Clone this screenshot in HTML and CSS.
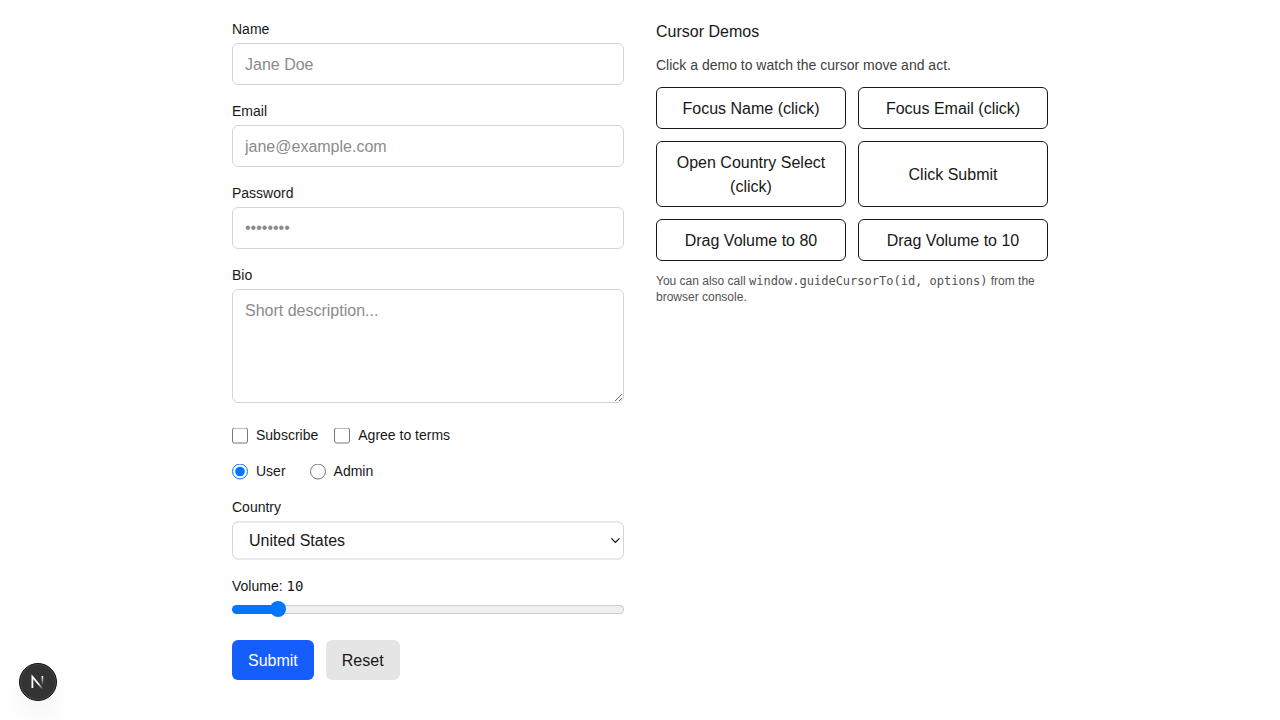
FILE: index.html
```html
<!DOCTYPE html>
<html lang="en">
<head>
<meta charset="utf-8">
<title>Cursor Demos</title>
<link rel="stylesheet" href="styles.css">
</head>
<body>
<main class="page">
  <form class="form">
    <div class="field"><label class="label" for="name">Name</label><input class="input" id="name" type="text" placeholder="Jane Doe"></div>
    <div class="field"><label class="label" for="email">Email</label><input class="input" id="email" type="email" placeholder="jane@example.com"></div>
    <div class="field"><label class="label" for="password">Password</label><input class="input password" id="password" type="password" placeholder="••••••••"></div>
    <div class="field bio"><label class="label" for="bio">Bio</label><textarea class="input area" id="bio" rows="4" placeholder="Short description..."></textarea></div>
    <div class="choices">
      <label class="choice"><input class="check" type="checkbox">Subscribe</label>
      <label class="choice"><input class="check" type="checkbox">Agree to terms</label>
    </div>
    <div class="choices radios">
      <label class="choice"><input class="check" type="radio" name="role" checked>User</label>
      <label class="choice"><input class="check" type="radio" name="role">Admin</label>
    </div>
    <div class="field"><label class="label" for="country">Country</label>
      <div class="select-wrap"><select class="select" id="country"><option>United States</option></select>
      <svg class="chevron" width="10" height="7" viewBox="0 0 10 7" fill="none"><path d="M1.3 1.4 5.4 5.4 9.5 1.4" stroke="#171717" stroke-width="1.3"/></svg></div>
    </div>
    <div class="field volume"><label class="label" for="volume">Volume: <span class="mono">10</span></label><input class="range" id="volume" type="range" min="0" max="100" value="10"></div>
    <div class="actions"><button class="btn submit" type="button">Submit</button><button class="btn reset" type="reset">Reset</button></div>
  </form>
  <section class="demos">
    <h2 class="title">Cursor Demos</h2>
    <p class="intro">Click a demo to watch the cursor move and act.</p>
    <div class="grid">
      <button class="demo">Focus Name (click)</button>
      <button class="demo">Focus Email (click)</button>
      <button class="demo">Open Country Select (click)</button>
      <button class="demo">Click Submit</button>
      <button class="demo">Drag Volume to 80</button>
      <button class="demo">Drag Volume to 10</button>
    </div>
    <p class="note">You can also call <code class="mono">window.guideCursorTo(id, options)</code> from the browser console.</p>
  </section>
</main>
<div class="badge">
  <svg width="38" height="38" viewBox="0 0 38 38" fill="none">
    <defs>
      <linearGradient id="diag" x1="20" y1="20" x2="24.5" y2="25.5" gradientUnits="userSpaceOnUse"><stop stop-color="#fff"/><stop offset="1" stop-color="#fff" stop-opacity="0"/></linearGradient>
      <linearGradient id="stem" x1="23" y1="13" x2="23" y2="22" gradientUnits="userSpaceOnUse"><stop stop-color="#fff"/><stop offset="1" stop-color="#fff" stop-opacity="0"/></linearGradient>
    </defs>
    <path d="M13.4 25V13.7L23.7 26" stroke="url(#diag)" stroke-width="1.8"/>
    <path d="M23.4 13v9" stroke="url(#stem)" stroke-width="1.6"/>
  </svg>
</div>
</body>
</html>
```
FILE: styles.css
```css
* { box-sizing: border-box; margin: 0; }
body { background: #fff; color: #171717; font: 16px/24px "Liberation Sans", Arial, sans-serif; height: 720px; overflow: hidden; }
input, textarea, select, button { font: inherit; color: inherit; }
.page { width: 816px; margin: 0 auto; padding-top: 19px; display: grid; grid-template-columns: 1fr 1fr; gap: 32px; align-items: start; }
.form { display: flex; flex-direction: column; gap: 16px; }
.field { display: flex; flex-direction: column; gap: 4px; }
.label, .choice { font-size: 14px; line-height: 20px; }
.input { width: 100%; height: 42px; padding: 9px 12px 7px; border: 1px solid #d4d4d4; border-radius: 6px; background: transparent; }
.input::placeholder { color: #8b8b8b; opacity: 1; }
.password { padding: 8px 12px; }
.area { height: 114px; resize: vertical; display: block; }
.bio { padding-bottom: 6px; }
.choices { display: flex; gap: 16px; }
.radios { gap: 24px; }
.choice { display: flex; align-items: center; gap: 8px; }
.check { width: 16px; height: 16px; margin: 0; transform: translateY(.5px); }
.select-wrap { position: relative; height: 39px; }
.select { display: block; width: 100%; height: 38px; padding: 6px 16px; border: 1px solid #d4d4d4; border-radius: 6px; background: transparent; appearance: none; transform: translateY(.5px); }
.chevron { position: absolute; right: 4px; top: 16px; pointer-events: none; }
.mono { font-family: "DejaVu Sans Mono", monospace; line-height: 1; }
.range { width: 100%; height: 16px; margin-top: 1px; appearance: none; background: transparent; }
.range::-webkit-slider-runnable-track { height: 9px; border: 1px solid transparent; border-radius: 5px; background: linear-gradient(90deg, #0075ff 46px, transparent 46px) border-box, linear-gradient(#efefef, #efefef) padding-box, linear-gradient(#cbcbcb, #cbcbcb) border-box; }
.range::-webkit-slider-thumb { appearance: none; width: 16px; height: 16px; margin-top: -4.5px; border-radius: 50%; background: #0075ff; }
.volume { padding-bottom: 7px; }
.actions { display: flex; gap: 12px; }
.btn { height: 40px; padding: 9px 16px 7px; border: 0; border-radius: 6px; }
.submit { background: #155dfc; color: #fff; }
.reset { background: #e5e5e5; }
.title { padding-top: 1px; font-size: 16px; font-weight: 400; line-height: 24px; }
.intro { margin-top: 11px; font-size: 14px; line-height: 20px; color: #404040; }
.grid { display: grid; grid-template-columns: 1fr 1fr; gap: 12px; margin-top: 12px; }
.demo { padding: 9px 16px 7px; border: 1px solid #171717; border-radius: 6px; background: transparent; }
.note { margin-top: 12px; font-size: 12px; line-height: 16px; color: #525252; }
.badge { position: absolute; left: 19px; top: 663px; width: 38px; height: 38px; border-radius: 50%; background: #333; border: 1px solid #111; box-shadow: inset 0 0 0 1px #4a4a4a, 0 16px 32px -8px rgba(0,0,0,.14); }
.badge svg { display: block; margin: -1px; }
```
